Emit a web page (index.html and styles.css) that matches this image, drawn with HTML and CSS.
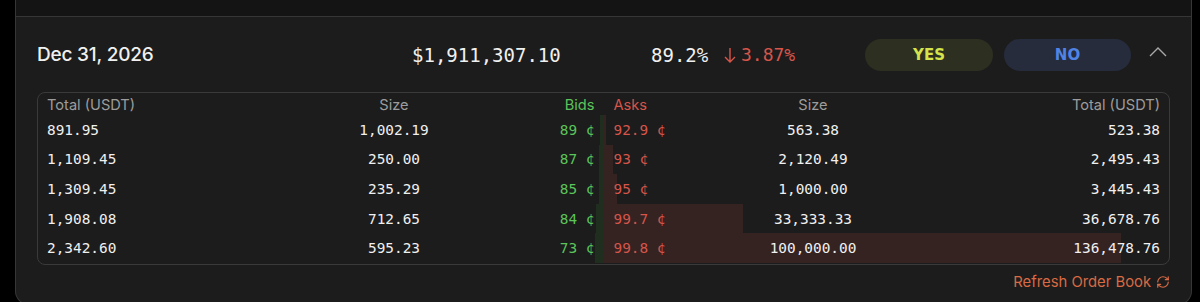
FILE: index.html
```html
<!DOCTYPE html>
<html>
<head>
<meta charset="utf-8">
<link rel="stylesheet" href="styles.css">
</head>
<body>
<div class="wrap">
  <div class="prev"></div>
  <div class="market">
    <div class="head">
      <div class="date">Dec 31, 2026</div>
      <div class="vol">$1,911,307.10</div>
      <div class="pct">89.2%</div>
      <div class="chg"><svg class="down" width="12" height="16" viewBox="0 0 12 16"><path d="M6 1 V15 M1 10 L6 15 L11 10" fill="none" stroke="#d6554a" stroke-width="1.4"/></svg>3.87%</div>
      <div class="actions">
        <button class="btn yes">YES</button>
        <button class="btn no">NO</button>
        <svg class="chev" width="18" height="10" viewBox="0 0 18 10"><path d="M1 9 L9 1 L17 9" fill="none" stroke="#a8a8a8" stroke-width="1.4"/></svg>
      </div>
    </div>
    <div class="book">
      <div class="row hdr">
        <div class="half left"><span class="c1">Total (USDT)</span><span class="c2">Size</span><span class="c3 green">Bids</span></div>
        <div class="half right"><span class="c1 red">Asks</span><span class="c2">Size</span><span class="c3">Total (USDT)</span></div>
      </div>
      <div class="row">
        <div class="half left"><i class="bar bid" style="width:3.4px"></i><span class="c1">891.95</span><span class="c2">1,002.19</span><span class="c3 green">89 ¢</span></div>
        <div class="half right"><i class="bar ask" style="width:2px"></i><span class="c1 red">92.9 ¢</span><span class="c2">563.38</span><span class="c3">523.38</span></div>
      </div>
      <div class="row">
        <div class="half left"><i class="bar bid" style="width:4.2px"></i><span class="c1">1,109.45</span><span class="c2">250.00</span><span class="c3 green">87 ¢</span></div>
        <div class="half right"><i class="bar ask" style="width:9.5px"></i><span class="c1 red">93 ¢</span><span class="c2">2,120.49</span><span class="c3">2,495.43</span></div>
      </div>
      <div class="row">
        <div class="half left"><i class="bar bid" style="width:5px"></i><span class="c1">1,309.45</span><span class="c2">235.29</span><span class="c3 green">85 ¢</span></div>
        <div class="half right"><i class="bar ask" style="width:13px"></i><span class="c1 red">95 ¢</span><span class="c2">1,000.00</span><span class="c3">3,445.43</span></div>
      </div>
      <div class="row">
        <div class="half left"><i class="bar bid" style="width:7.2px"></i><span class="c1">1,908.08</span><span class="c2">712.65</span><span class="c3 green">84 ¢</span></div>
        <div class="half right"><i class="bar ask" style="width:139px"></i><span class="c1 red">99.7 ¢</span><span class="c2">33,333.33</span><span class="c3">36,678.76</span></div>
      </div>
      <div class="row">
        <div class="half left"><i class="bar bid" style="width:8.9px"></i><span class="c1">2,342.60</span><span class="c2">595.23</span><span class="c3 green">73 ¢</span></div>
        <div class="half right"><i class="bar ask" style="width:517px"></i><span class="c1 red">99.8 ¢</span><span class="c2">100,000.00</span><span class="c3">136,478.76</span></div>
      </div>
    </div>
    <div class="foot">
      <span class="refresh">Refresh Order Book</span>
      <svg class="ricon" width="14" height="14" viewBox="0 0 24 24" fill="none" stroke="#d86a44" stroke-width="2" stroke-linecap="round" stroke-linejoin="round"><path d="M3 12a9 9 0 0 1 9-9 9.75 9.75 0 0 1 6.74 2.74L21 8"/><path d="M21 3v5h-5"/><path d="M21 12a9 9 0 0 1-9 9 9.75 9.75 0 0 1-6.74-2.74L3 16"/><path d="M8 16H3v5"/></svg>
    </div>
  </div>
</div>
</body>
</html>
```
FILE: styles.css
```css
html, body {
  margin: 0;
  padding: 0;
  background: #000;
  height: 302px;
  overflow: hidden;
}
.wrap {
  margin-left: 15px;
  width: 1175px;
  height: 304px;
  border: 1px solid #363636;
  border-top: none;
  border-radius: 0 0 14px 14px;
  background: #1c1c1c;
  font-family: Inter, "Noto Sans", sans-serif;
  color: #f0f0f0;
}
.prev {
  height: 16px;
  background: #141414;
  border-bottom: 1px solid #363636;
}
.market {
  padding: 0 21px;
}
.head {
  display: flex;
  align-items: center;
  height: 75px;
}
.date {
  width: 375px;
  font-size: 19px;
  font-weight: 500;
  letter-spacing: -0.2px;
}
.vol, .pct, .chg {
  font-family: "DejaVu Sans Mono", "Liberation Mono", monospace;
  font-size: 19px;
}
.vol {
  width: 239px;
}
.pct {
  width: 73px;
}
.chg {
  display: flex;
  align-items: center;
  color: #d6554a;
  font-size: 18px;
}
.down {
  margin-right: 5px;
  margin-top: 1px;
}
.actions {
  margin-left: auto;
  display: flex;
  align-items: center;
}
.btn {
  border: none;
  height: 32px;
  border-radius: 16px;
  font-family: "DejaVu Sans", sans-serif;
  font-weight: 700;
  font-size: 15px;
  padding: 0;
}
.yes {
  width: 128px;
  background: #2d2f21;
  color: #d5e34c;
}
.no {
  width: 127px;
  margin-left: 11px;
  background: #262c3c;
  color: #4f84e6;
}
.chev {
  margin-left: 18px;
  margin-right: 3px;
  margin-top: -6px;
}
.book {
  border: 1px solid #3a3a3a;
  border-radius: 8px;
  overflow: hidden;
  padding-bottom: 1px;
}
.row {
  display: grid;
  grid-template-columns: 1fr 1fr;
  height: 29.6px;
}
.row.hdr {
  height: 22px;
}
.half {
  position: relative;
  display: grid;
  align-items: center;
  font-family: "DejaVu Sans Mono", "Liberation Mono", monospace;
  font-size: 14.4px;
}
.half.left {
  grid-template-columns: 267px 160px 1fr;
  padding: 0 9px;
}
.half.right {
  grid-template-columns: 1fr 160px 267px;
  padding: 0 9px 0 9px;
}
.half span {
  position: relative;
  white-space: nowrap;
}
.c2 {
  text-align: center;
}
.left .c3 {
  text-align: right;
}
.right .c3 {
  text-align: right;
}
.right .c1 {
  padding-left: 1px;
}
.hdr .half {
  font-family: Inter, "Noto Sans", sans-serif;
  font-size: 14.6px;
  color: #9c9c9c;
  padding-top: 1px;
}
.green { color: #5bc45a; }
.red { color: #d6554a; }
.bar {
  position: absolute;
  top: 0;
  bottom: 0;
}
.bar.bid {
  right: 0;
  background: #1f2e1f;
}
.bar.ask {
  left: 0;
  background: #352322;
}
.foot {
  display: flex;
  justify-content: flex-end;
  align-items: center;
  height: 34px;
}
.refresh {
  color: #d86a44;
  font-size: 14.8px;
}
.ricon {
  margin-left: 5px;
}
```
